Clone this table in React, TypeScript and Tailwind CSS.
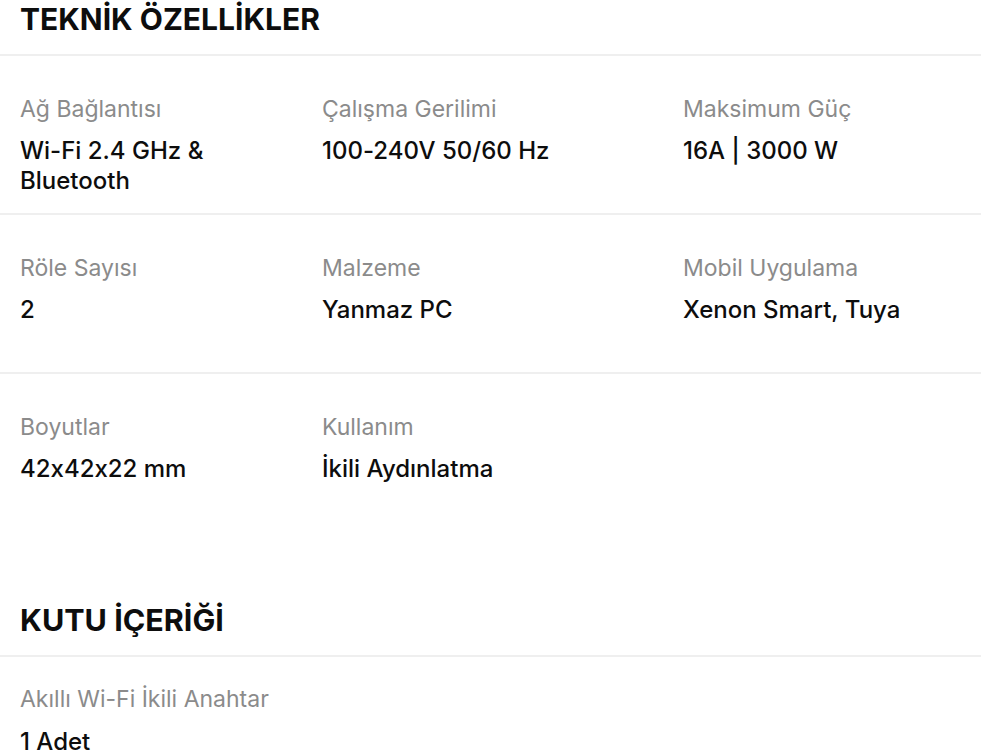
import React from 'react';

const specs = [
  [
    { label: 'Ağ Bağlantısı', value: 'Wi-Fi 2.4 GHz & Bluetooth' },
    { label: 'Çalışma Gerilimi', value: '100-240V 50/60 Hz' },
    { label: 'Maksimum Güç', value: '16A | 3000 W' },
  ],
  [
    { label: 'Röle Sayısı', value: '2' },
    { label: 'Malzeme', value: 'Yanmaz PC' },
    { label: 'Mobil Uygulama', value: 'Xenon Smart, Tuya' },
  ],
  [
    { label: 'Boyutlar', value: '42x42x22 mm' },
    { label: 'Kullanım', value: 'İkili Aydınlatma' },
  ],
];

const SpecCell = ({ label, value }: { label: string; value: string }) => (
  <div className="pr-5">
    <p className="text-[23px] leading-[28px] text-[#8b8b8b]">{label}</p>
    <p className="mt-[13px] text-[24px] leading-[30px] font-medium text-[#0d0d0d]">{value}</p>
  </div>
);

export default function App() {
  return (
    <div className="min-h-screen bg-white text-[#0d0d0d] font-['Inter',sans-serif] [font-feature-settings:'calt'_0]">
      <h2 className="pl-5 text-[30px] leading-[38px] font-bold">TEKNİK ÖZELLİKLER</h2>
      <div className="mt-4">
        {specs.map((row, i) => (
          <div key={i} className="h-[159px] pt-[39px] border-t-2 border-[#efefef]">
            <div className="grid grid-cols-[302px_361px_1fr] pl-5">
              {row.map((s) => (
                <SpecCell key={s.label} label={s.label} value={s.value} />
              ))}
            </div>
          </div>
        ))}
      </div>

      <h2 className="mt-[70px] pl-5 text-[30.5px] leading-[38px] font-bold">KUTU İÇERİĞİ</h2>
      <div className="mt-4 border-t-2 border-[#efefef] pt-[28px] pl-5">
        <p className="text-[23px] leading-[28px] text-[#8b8b8b]">Akıllı Wi-Fi İkili Anahtar</p>
        <p className="mt-[14px] text-[24px] leading-[30px] font-medium text-[#0d0d0d]">1 Adet</p>
      </div>
    </div>
  );
}
